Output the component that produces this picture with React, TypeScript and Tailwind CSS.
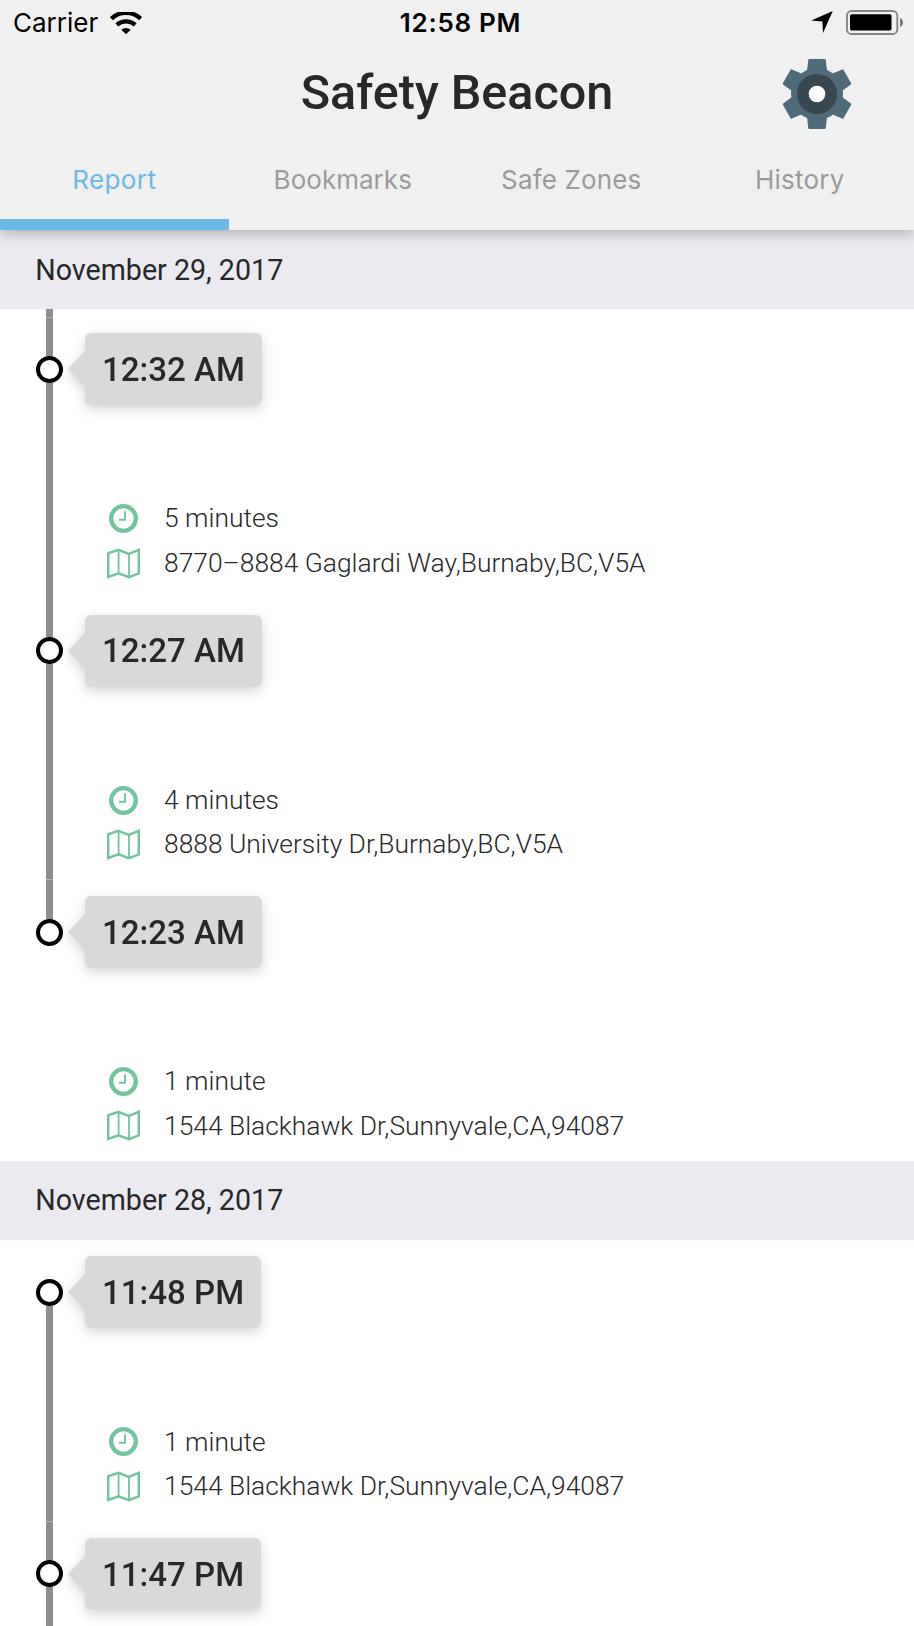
type Stop = { time: string; duration?: string; address?: string };
type Day = { date: string; stops: Stop[] };

const tabs = [
  { label: "Report", tracking: "tracking-[0.4px]" },
  { label: "Bookmarks", tracking: "tracking-[0.03px]" },
  { label: "Safe Zones", tracking: "tracking-[0.15px]" },
  { label: "History", tracking: "tracking-[0.25px]" },
];

const days: Day[] = [
  {
    date: "November 29, 2017",
    stops: [
      { time: "12:32 AM", duration: "5 minutes", address: "8770–8884 Gaglardi Way,Burnaby,BC,V5A" },
      { time: "12:27 AM", duration: "4 minutes", address: "8888 University Dr,Burnaby,BC,V5A" },
      { time: "12:23 AM", duration: "1 minute", address: "1544 Blackhawk Dr,Sunnyvale,CA,94087" },
    ],
  },
  {
    date: "November 28, 2017",
    stops: [
      { time: "11:48 PM", duration: "1 minute", address: "1544 Blackhawk Dr,Sunnyvale,CA,94087" },
      { time: "11:47 PM" },
    ],
  },
];

function WifiIcon() {
  return (
    <svg className="ml-3 h-[22px] w-8" viewBox="0 0 32 22">
      <path d="M1.3 7.3a21.3 21.3 0 0 1 29.4 0" fill="none" stroke="#000" strokeWidth="4.4" transform="translate(0 -.6)" />
      <path d="M6.8 13.4a13.6 13.6 0 0 1 18.4 0" fill="none" stroke="#000" strokeWidth="4.2" transform="translate(0 -.5)" />
      <path d="M11.3 17.8a6.8 6.8 0 0 1 9.4 0L16 22.2z" />
    </svg>
  );
}

function LocationIcon() {
  return (
    <svg className="h-[22px] w-[22px]" viewBox="0 0 22 22">
      <path d="M.3 9.6 21.8 0 12 22 11.4 10.4z" />
    </svg>
  );
}

function BatteryIcon() {
  return (
    <svg className="ml-[13px] h-[25px] w-[58px]" viewBox="0 0 58 25">
      <rect x="1" y="1" width="50.3" height="23" rx="4.6" fill="none" stroke="#858585" strokeWidth="1.9" />
      <rect x="4" y="4.2" width="41.500" height="16.2" rx="1.6" />
      <path d="M54 8c4 1.500 4 7.500 0 9z" fill="#777" />
    </svg>
  );
}

function GearIcon() {
  return (
    <svg className="h-[70px] w-[70px]" viewBox="-105 -105 210 210">
      <g fill="#4f6a79">
        <circle r="78" />
        {[0, 60, 120, 180, 240, 300].map((angle) => (
          <path key={angle} d="M-23-105H23Q26-105 26.300-102L31-60H-31L-26.300-102Q-26-105-23-105Z" transform={`rotate(${angle})`} />
        ))}
      </g>
      <circle r="60" fill="#374850" />
      <circle r="25" fill="#fff" />
    </svg>
  );
}

function ClockIcon() {
  return (
    <svg className="h-[29px] w-[29px]" viewBox="0 0 29 29" fill="none" stroke="#71c59d">
      <circle cx="14.500" cy="14.500" r="12.300" strokeWidth="4.300" />
      <path d="M16 7.300v8.500h-6" strokeWidth="1.900" />
    </svg>
  );
}

function MapIcon() {
  return (
    <svg className="h-[31px] w-[33px]" viewBox="0 0 33 31" fill="none" stroke="#71c59d">
      <path d="M1.200 5.300 11.500 1.900 21.800 5.800 31.800 1.900V25.400L21.800 29.200 11.500 25.400 1.200 29z" strokeWidth="2.500" />
      <path d="M11.600 2v23.500M22 6v23" strokeWidth="1.800" />
    </svg>
  );
}

function TimelineRow({ stop, lineAbove, lineBelow, joint }: { stop: Stop; lineAbove: boolean; lineBelow: boolean; joint: boolean }) {
  return (
    <div className="flex h-[281.4px] shrink-0">
      <div className="ml-[36px] flex w-[27px] shrink-0 flex-col items-center">
        <div className={`h-[39.3px] w-[7px] shrink-0 ${lineAbove ? "bg-[#8e8e8e]" : ""} ${joint ? "border-t border-[#b4b4b4]" : ""}`} />
        <div className="h-[27px] w-[27px] shrink-0 rounded-full border-[4.500px] border-black bg-white" />
        <div className={`w-[7px] flex-1 ${lineBelow ? "bg-[#8e8e8e]" : ""}`} />
      </div>
      <div className="ml-[5px] flex flex-col items-start pt-[16.800px]">
        <div className="flex items-center drop-shadow-[0_4px_6px_rgba(0,0,0,0.17)]">
          <svg className="h-[36px] w-[17px]" viewBox="0 0 17 36">
            <path d="M17 0V36L0 18z" fill="#d9d9d9" />
          </svg>
          <div className="flex h-[72px] items-center rounded-[6px] bg-[#d9d9d9] pt-px pr-[17px] pl-[17px] text-[33.050px] font-medium whitespace-nowrap">
            {stop.time}
          </div>
        </div>
        {stop.duration && (
          <div className="mt-[91.300px] ml-[39px] flex h-[44.300px] items-center text-[26.400px] font-light whitespace-nowrap">
            <span className="flex w-[33px] justify-center"><ClockIcon /></span>
            <span className="ml-[24px] pt-px">{stop.duration}</span>
          </div>
        )}
        {stop.address && (
          <div className="ml-[39px] flex h-[44.300px] items-center text-[26.400px] font-light whitespace-nowrap">
            <MapIcon />
            <span className="ml-[24px] pt-px">{stop.address}</span>
          </div>
        )}
      </div>
    </div>
  );
}

export default function App() {
  return (
    <div className="flex h-[1626px] w-[914px] flex-col overflow-hidden bg-white font-['Roboto',sans-serif] text-[#282828]">
      <header className="z-10 flex h-[230px] shrink-0 flex-col bg-[#f0f0f0] shadow-[0_2px_14px_rgba(0,0,0,0.3)]">
        <div className="grid h-[45px] grid-cols-3 items-center pr-[10px] pl-[13px] font-['Inter',sans-serif] text-[26px] text-black">
          <div className="flex items-center"><span>Carrier</span><WifiIcon /></div>
          <div className="pl-[4px] text-center font-semibold tracking-[0.7px]">12:58 PM</div>
          <div className="flex items-center justify-end pb-px"><LocationIcon /><BatteryIcon /></div>
        </div>
        <div className="grid h-[98px] grid-cols-[1fr_auto_1fr] items-center">
          <h1 className="col-start-2 pb-[2px] text-[48.500px] font-medium">Safety Beacon</h1>
          <button className="mr-[62px] justify-self-end" aria-label="Settings"><GearIcon /></button>
        </div>
        <nav className="grid flex-1 grid-cols-4 font-['Inter',sans-serif] text-[26px] text-[#9b9b9b]">
          {tabs.map((tab, i) => (
            <button
              key={tab.label}
              className={`border-b-[11px] pb-[3px] ${tab.tracking} ${i === 0 ? "border-[#6cb9e8] text-[#6cb9e8]" : "border-transparent"}`}
            >
              {tab.label}
            </button>
          ))}
        </nav>
      </header>
      {days.map((day, d) => (
        <section key={day.date} className="shrink-0">
          <h2 className="flex h-[79px] items-center bg-[#ebeaf1] pt-px pl-[35.300px] text-[28.650px]">{day.date}</h2>
          {d === 0 && <div className="ml-[46px] h-[7.500px] w-[7px] bg-[#8e8e8e]" />}
          {day.stops.map((stop, i) => (
            <TimelineRow
              key={stop.time}
              stop={stop}
              lineAbove={d === 0 || i > 0}
              lineBelow={d !== 0 || i < day.stops.length - 1}
              joint={d === 0 ? i !== 1 : i > 0}
            />
          ))}
        </section>
      ))}
    </div>
  );
}
